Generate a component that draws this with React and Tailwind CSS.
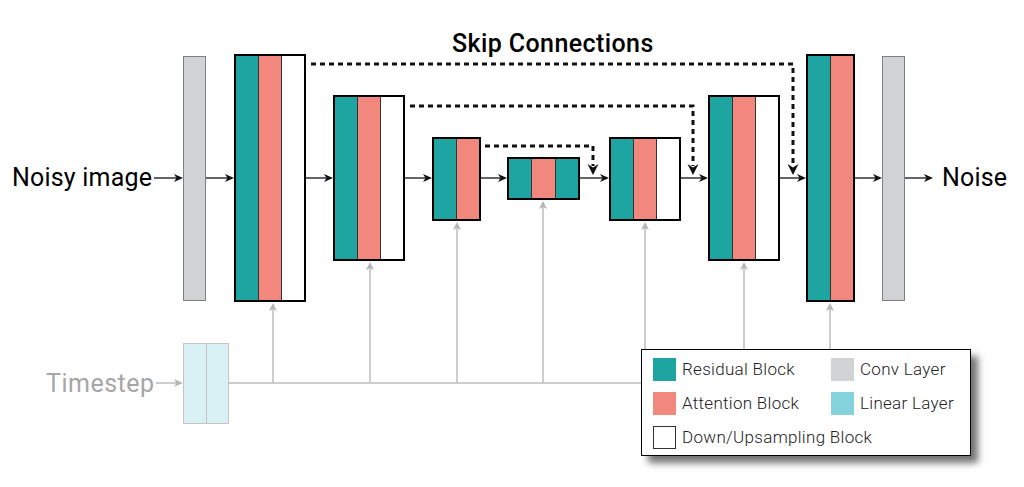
import React from "react";

// outer boxes of the U-Net blocks, [left, top, width, height, columns]
const blocks = [
  { x: 234, y: 54, w: 72, h: 248, cols: ["teal", "pink", "white"] },
  { x: 333, y: 95, w: 72, h: 166, cols: ["teal", "pink", "white"] },
  { x: 432, y: 137, w: 49, h: 84, cols: ["teal", "pink"] },
  { x: 507, y: 157, w: 73, h: 43, cols: ["teal", "pink", "teal"] },
  { x: 609, y: 137, w: 72, h: 84, cols: ["teal", "pink", "white"] },
  { x: 708, y: 95, w: 72, h: 166, cols: ["teal", "pink", "white"] },
  { x: 806, y: 54, w: 49, h: 248, cols: ["teal", "pink"] },
];

const colBg = {
  teal: "bg-[#1ea5a2]",
  pink: "bg-[#f2877e]",
  white: "bg-white",
};

// main forward arrows on y=178
const flow = [
  [154, 183],
  [206, 234],
  [306, 333],
  [405, 432],
  [481, 507],
  [580, 609],
  [681, 708],
  [780, 806],
  [855, 882],
  [905, 933],
];

// timestep feeds: x and the bottom of the block it points at
const feeds = [
  [273, 302],
  [370, 261],
  [457, 221],
  [543, 200],
  [645, 221],
  [744, 261],
  [830, 302],
];

// dotted skip connections
const skips = [
  { x1: 311, x2: 793, y: 64 },
  { x1: 410, x2: 693, y: 106 },
  { x1: 485, x2: 593, y: 146 },
];

function arrowRight(x, y) {
  return `M${x},${y} L${x - 9},${y - 4} L${x - 6.5},${y} L${x - 9},${y + 4} Z`;
}

function arrowUp(x, y) {
  return `M${x},${y} L${x - 4},${y + 8} L${x},${y + 6} L${x + 4},${y + 8} Z`;
}

function arrowDown(x, y) {
  return `M${x},${y} L${x - 5.5},${y - 11} L${x},${y - 7.5} L${x + 5.5},${y - 11} Z`;
}

function Block({ b }) {
  return (
    <div
      className="absolute flex border-2 border-black"
      style={{ left: b.x, top: b.y, width: b.w, height: b.h }}
    >
      {b.cols.map((c, i) => (
        <div
          key={i}
          className={`flex-1 ${colBg[c]} ${i > 0 ? "border-l border-[#333]" : ""}`}
        />
      ))}
    </div>
  );
}

function LegendItem({ swatch, label }) {
  return (
    <div className="flex items-center gap-[6px] h-[23px]">
      <div className={`w-[23px] h-[23px] shrink-0 ${swatch}`} />
      <span>{label}</span>
    </div>
  );
}

export default function App() {
  return (
    <div className="relative w-[1024px] h-[487px] bg-white overflow-hidden font-['Roboto',sans-serif]">
      <svg
        className="absolute inset-0"
        width="1024"
        height="487"
        viewBox="0 0 1024 487"
      >
        {/* timestep bus */}
        <g stroke="#bdbdbd" strokeWidth="1.5" fill="none">
          <line x1="156" y1="383" x2="178" y2="383" />
          <line x1="229" y1="383" x2="830" y2="383" />
          {feeds.map(([x, y]) => (
            <line key={x} x1={x} y1="383" x2={x} y2={y + 4} />
          ))}
        </g>
        <g fill="#b5b5b5">
          <path d={arrowRight(183, 383)} />
          {feeds.map(([x, y]) => (
            <path key={x} d={arrowUp(x, y + 1)} />
          ))}
        </g>

        {/* forward path */}
        <g stroke="#111" strokeWidth="1.3">
          {flow.map(([a, b]) => (
            <line key={a} x1={a} y1="178" x2={b - 5} y2="178" />
          ))}
        </g>
        <g fill="#111">
          {flow.map(([a, b]) => (
            <path key={a} d={arrowRight(b, 178)} />
          ))}
        </g>

        {/* skip connections */}
        <g stroke="#111" strokeWidth="3" strokeDasharray="5 4" fill="none">
          {skips.map((s) => (
            <path key={s.x1} d={`M${s.x1},${s.y} H${s.x2} V166`} />
          ))}
        </g>
        <g fill="#111">
          {skips.map((s) => (
            <path key={s.x1} d={arrowDown(s.x2, 175)} />
          ))}
        </g>

        <g fontSize="25" fill="#000" letterSpacing="0.2">
          <text x="12" y="186">Noisy image</text>
          <text x="942" y="186">Noise</text>
          <text x="452" y="52" fontWeight="500" letterSpacing="0.4">
            Skip Connections
          </text>
          <text x="46" y="392" fill="#a6a6a6" letterSpacing="0.5">
            Timestep
          </text>
        </g>
      </svg>

      {/* conv layers */}
      <div className="absolute left-[183px] top-[56px] w-[23px] h-[245px] bg-[#d1d2d4] border border-[#808080]" />
      <div className="absolute left-[882px] top-[56px] w-[23px] h-[245px] bg-[#d1d2d4] border border-[#808080]" />

      {/* linear layer for timestep embedding */}
      <div className="absolute left-[183px] top-[343px] w-[46px] h-[81px] flex border border-[#c4c4c4] bg-[#d9f1f5]">
        <div className="flex-1" />
        <div className="flex-1 border-l border-[#c4c4c4]" />
      </div>

      {blocks.map((b, i) => (
        <Block key={i} b={b} />
      ))}

      {/* legend */}
      <div className="absolute left-[641px] top-[349px] w-[330px] h-[107px] bg-white border-[1.5px] border-black shadow-[7px_7px_7px_rgba(0,0,0,0.55)] pl-[11px] pt-[8px] text-[17px] font-light text-[#222] tracking-[0.3px]">
        <div className="grid grid-cols-[178px_1fr] gap-y-[11px]">
          <LegendItem swatch="bg-[#1ea5a2]" label="Residual Block" />
          <LegendItem swatch="bg-[#d1d2d4]" label="Conv Layer" />
          <LegendItem swatch="bg-[#f2877e]" label="Attention Block" />
          <LegendItem swatch="bg-[#84d3dc]" label="Linear Layer" />
          <div className="col-span-2">
            <LegendItem
              swatch="bg-white border-[1.5px] border-[#333]"
              label="Down/Upsampling Block"
            />
          </div>
        </div>
      </div>
    </div>
  );
}
